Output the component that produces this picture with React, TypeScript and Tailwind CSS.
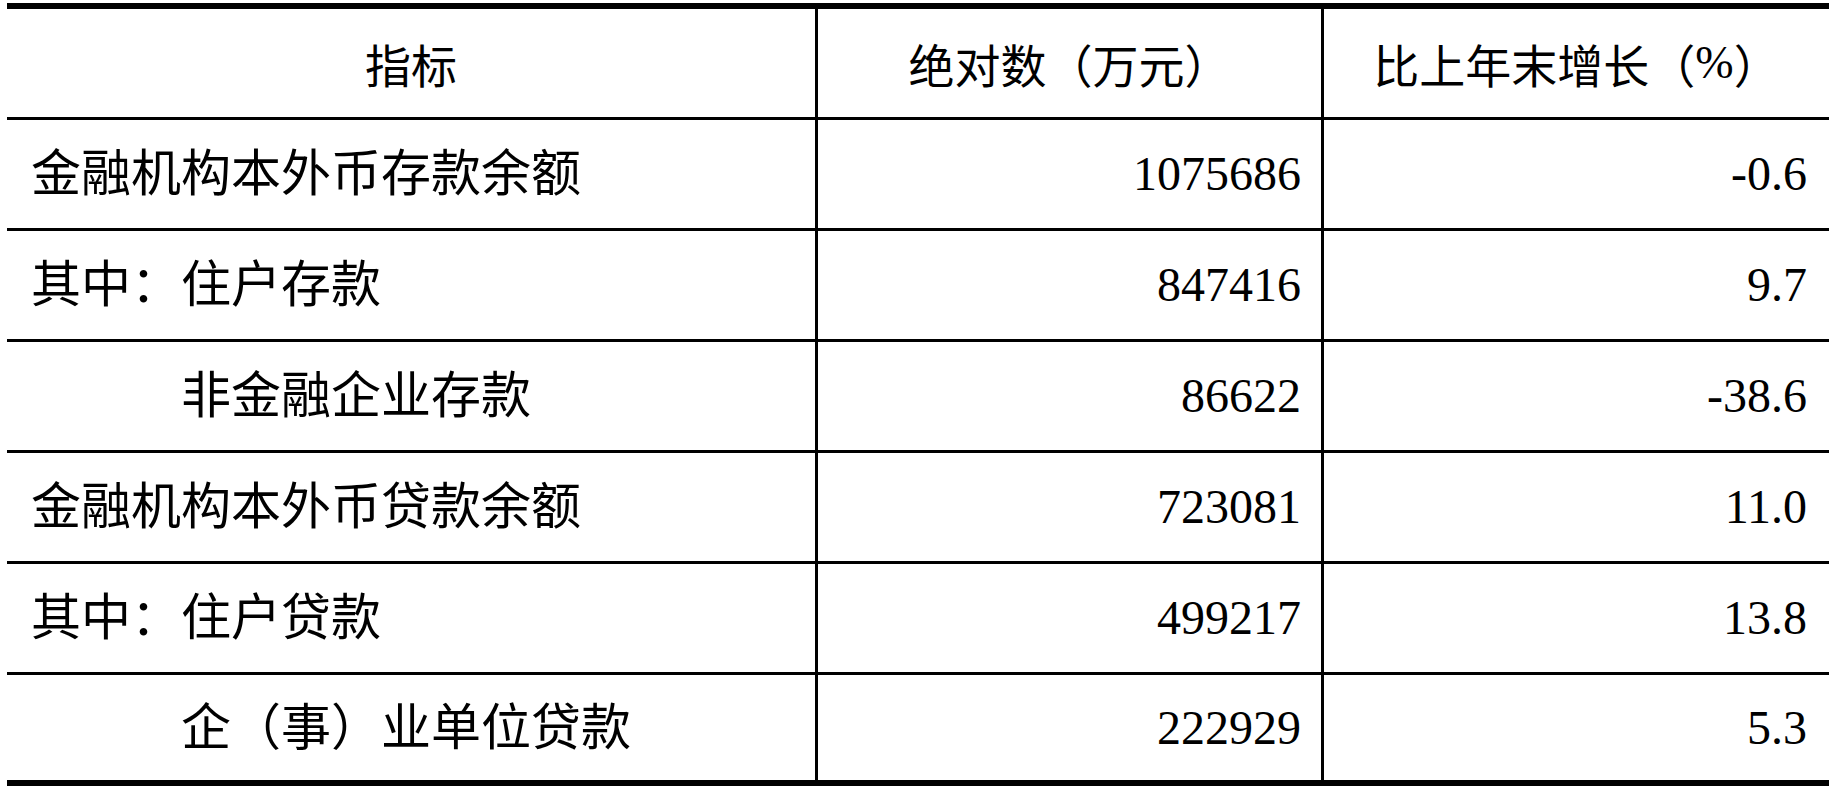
const rows = [
  { name: '金融机构本外币存款余额', value: '1075686', growth: '-0.6', indent: false },
  { name: '其中：住户存款', value: '847416', growth: '9.7', indent: false },
  { name: '非金融企业存款', value: '86622', growth: '-38.6', indent: true },
  { name: '金融机构本外币贷款余额', value: '723081', growth: '11.0', indent: false },
  { name: '其中：住户贷款', value: '499217', growth: '13.8', indent: false },
  { name: '企（事）业单位贷款', value: '222929', growth: '5.3', indent: true },
]

export default function App() {
  return (
    <div className="min-h-screen bg-white text-black">
      {/* TABLE */}
      <div className="ml-[7px] mt-[3px] w-[1822px] border-t-[6px] border-b-[6px] border-black">

        {/* HEADER */}
        <div className="grid grid-cols-[808px_506px_508px] h-[108px] font-['Noto_Sans_CJK_SC',sans-serif] text-[46px] leading-none">
          <div className="flex items-center justify-center">指标</div>
          <div className="flex items-center justify-center border-l-[3px] border-black">
            绝对数（万元）
          </div>
          <div className="flex items-center justify-center border-l-[3px] border-black">
            比上年末增长（<span className="font-['Liberation_Serif',serif]">%</span>）
          </div>
        </div>

        {/* BODY */}
        {rows.map((row, index) => (
          <div
            key={index}
            className={
              index === rows.length - 1
                ? 'grid grid-cols-[808px_506px_508px] h-[108px] border-t-[3px] border-black leading-none'
                : 'grid grid-cols-[808px_506px_508px] h-[111px] border-t-[3px] border-black leading-none'
            }
          >
            <div
              className={
                row.indent
                  ? "flex items-center pl-[174px] text-[50px] font-['Liberation_Serif','Noto_Sans_CJK_SC',serif]"
                  : "flex items-center pl-[24px] text-[50px] font-['Liberation_Serif','Noto_Sans_CJK_SC',serif]"
              }
            >
              {row.name}
            </div>
            <div className="flex items-center justify-end border-l-[3px] border-black pr-[20px] text-[48px] font-['Liberation_Serif','Noto_Sans_CJK_SC',serif]">
              {row.value}
            </div>
            <div className="flex items-center justify-end border-l-[3px] border-black pr-[22px] text-[48px] font-['Liberation_Serif','Noto_Sans_CJK_SC',serif]">
              {row.growth}
            </div>
          </div>
        ))}

      </div>
    </div>
  )
}
